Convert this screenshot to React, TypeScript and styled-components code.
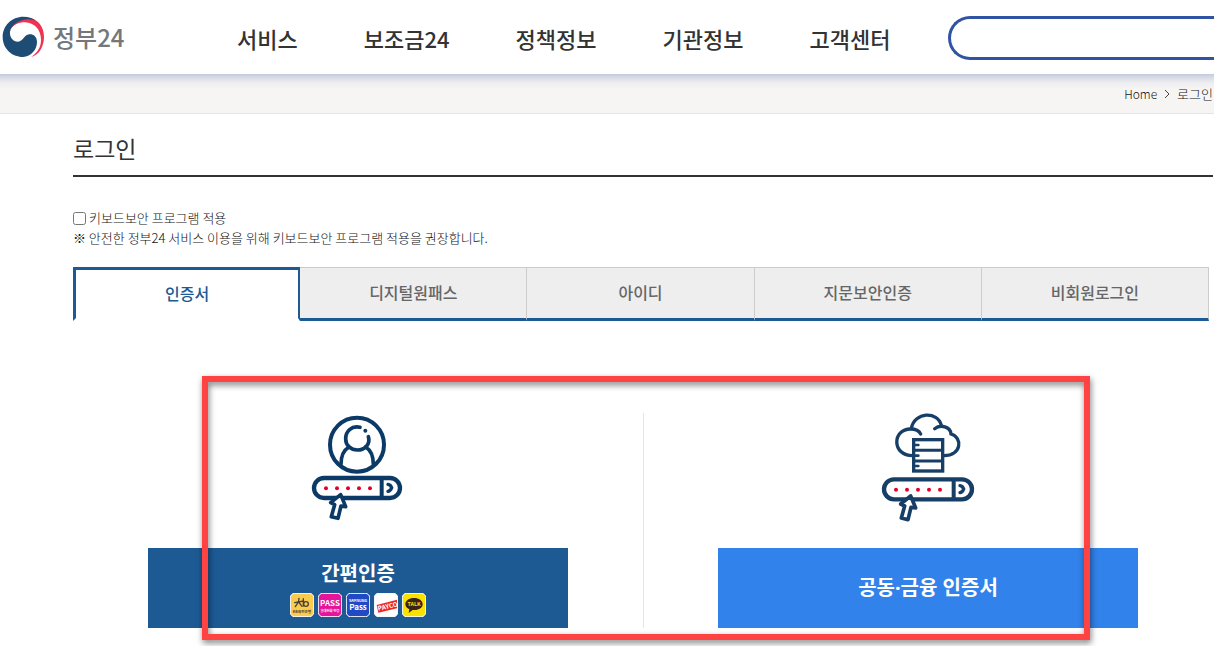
import React from "react";
import styled, { createGlobalStyle } from "styled-components";

const navy = "#1d5a94";
const ink = "#333333";
const iconNavy = "#0b3a66";

const GlobalStyle = createGlobalStyle`
  *, *::before, *::after { box-sizing: border-box; }
  body {
    margin: 0;
    background: #ffffff;
    color: ${ink};
    font-family: "Noto Sans CJK KR", "Noto Sans", sans-serif;
    font-size: 13px;
    line-height: 20px;
  }
  button, input { font-family: inherit; }
  a { color: inherit; text-decoration: none; }
`;

const Header = styled.header`
  display: flex;
  align-items: center;
  height: 74px;
  padding: 2px 0 0 2px;
  background: #ffffff;
`;

const Logo = styled.a`
  display: flex;
  align-items: center;
  gap: 8px;
  width: 235px;
  flex-shrink: 0;
  color: #75777a;
  font-size: 24px;
  font-weight: 500;
  line-height: 36px;
  padding-bottom: 2px;
`;

const Nav = styled.nav`
  display: flex;
  flex-shrink: 0;
  gap: 66px;
  margin-right: 58px;
`;

const NavLink = styled.a`
  font-size: 22px;
  font-weight: 500;
  line-height: 32px;
  white-space: nowrap;
`;

const SearchInput = styled.input`
  flex: 1;
  min-width: 0;
  height: 44px;
  padding: 0 20px;
  border: 3px solid #3153a4;
  border-right: 0;
  border-radius: 22px 0 0 22px;
  background: #ffffff;
  font-size: 16px;
  outline: none;
`;

const BreadcrumbBar = styled.nav`
  display: flex;
  justify-content: flex-end;
  align-items: center;
  gap: 7px;
  height: 40px;
  padding-right: 1px;
  border-bottom: 1px solid #e4e4e4;
  background: linear-gradient(#c2cbdc, #d9dde6 4px, #eeeef1 9px, #f6f5f4 15px);
  color: #111111;
  font-weight: 300;
`;

const HomeLink = styled.a`
  font-size: 12px;
`;

const Main = styled.main`
  padding: 0 1px 18px 73px;
`;

const Title = styled.h1`
  margin: 0;
  padding: 17px 0 10px;
  border-bottom: 2px solid ${ink};
  font-size: 23px;
  font-weight: 400;
  line-height: 34px;
`;

const Security = styled.div`
  margin-top: 31px;
  color: #111111;
  font-weight: 300;
`;

const CheckLabel = styled.label`
  display: flex;
  align-items: center;
  gap: 3px;
`;

const Checkbox = styled.input`
  width: 13px;
  height: 13px;
  margin: 0;
`;

const Notice = styled.p`
  margin: 0;
`;

const Tabs = styled.div`
  display: grid;
  grid-template-columns: repeat(5, 1fr);
  margin: 19px 4px 0 0;
`;

const Tab = styled.button<{ $active?: boolean }>`
  height: 54px;
  padding: 0 0 2px;
  border-style: solid;
  border-color: ${(p) =>
    p.$active ? `${navy} ${navy} transparent` : `#cccccc #cccccc ${navy}`};
  border-width: ${(p) => (p.$active ? "3px 2px 3px 3px" : "1px 1px 3px 0")};
  background: ${(p) => (p.$active ? "#ffffff" : "#eeeeee")};
  color: ${(p) => (p.$active ? navy : "#666666")};
  font-size: 16px;
  font-weight: 500;
  line-height: 24px;
  cursor: pointer;
`;

const Methods = styled.section`
  position: relative;
  display: grid;
  grid-template-columns: 1fr 1fr;
  margin-top: 92px;
`;

const Method = styled.div`
  display: flex;
  flex-direction: column;
  align-items: center;
  gap: 20px;

  & + & {
    box-shadow: inset 1px 0 #e5e5e5;
  }
`;

const MethodButton = styled.button<{ $color: string }>`
  display: flex;
  flex-direction: column;
  align-items: center;
  justify-content: center;
  gap: 4px;
  width: 420px;
  max-width: 100%;
  height: 80px;
  padding: 0;
  border: 0;
  background: ${(p) => p.$color};
  color: #ffffff;
  font-family: "Noto Sans", "Noto Sans CJK KR", sans-serif;
  font-size: 20px;
  font-weight: 700;
  line-height: 30px;
  cursor: pointer;
`;

const Providers = styled.span`
  display: flex;
  gap: 4px;
`;

const Highlight = styled.div`
  position: absolute;
  inset: -37px 123px -12px 129px;
  border: 6px solid #ff4343;
  filter: drop-shadow(1px 3px 3px rgba(0, 0, 0, 0.5));
  pointer-events: none;
`;

const GovEmblem = () => (
  <svg width="43" height="42" viewBox="7 48 129 126" aria-hidden="true">
    <path
      fill="#ef3350"
      d="M33 88C38 66 64 52 90 54C116 58 133 82 133 110C133 140 118 165 94 171C112 160 124 142 124 120C124 88 104 68 76 67C56 67 42 74 33 88Z"
    />
    <path
      fill="#1d4c75"
      d="M114 66C102 55 87 50 71 50C36 50 9 77 9 111C9 145 36 171 70 171C95 170 112 148 112 126C112 110 101 102 89 103C72 104 72 124 55 125C40 125 29 111 31 95C36 73 58 60 82 58C96 57 106 60 114 66Z"
    />
  </svg>
);

const Chevron = () => (
  <svg width="6" height="10" viewBox="0 0 6 10" aria-hidden="true">
    <path d="M1 1l4 4-4 4" fill="none" stroke="#444444" />
  </svg>
);

const PasswordBar = ({ width }: { width: number }) => (
  <>
    <rect x="42" y="219" width={width} height="60" rx="30" strokeWidth="13" />
    <path d={`M${width - 13} 219v60`} strokeWidth="12" />
    <path
      d={`M${width + 6} 238q8 1 11 10q-3 9-11 11`}
      strokeWidth="10"
      strokeLinecap="round"
    />
    <g fill="#e4002b" stroke="none">
      {[78, 111, 144, 177, 210].map((x) => (
        <circle key={x} cx={x} cy="250" r="6" />
      ))}
    </g>
    <path
      d="M122 269L92 293L104 299L94 335L114 340L123 303L137 305Z"
      fill="#ffffff"
      strokeWidth="11"
      strokeLinejoin="round"
    />
  </>
);

const UserIcon = () => (
  <svg width="116" height="115" viewBox="0 24 348 345" fill="none" stroke={iconNavy} aria-hidden="true">
    <circle cx="171" cy="119" r="81" strokeWidth="12" />
    <g strokeWidth="11" strokeLinecap="round">
      <path d="M180 67C154 61 137 80 137 101C137 122 153 135 172 135C196 135 212 116 205 95" />
      <path d="M147 126C130 136 123 154 123 178M197 126C213 136 220 154 220 178" />
    </g>
    <circle cx="196" cy="77" r="6" fill={iconNavy} stroke="none" />
    <PasswordBar width={258} />
  </svg>
);

const CloudIcon = () => (
  <svg width="116" height="115" viewBox="0 24 348 345" fill="none" stroke="#173e67" aria-hidden="true">
    <g strokeWidth="10" strokeLinecap="round">
      <path d="M128 152C65 152 66 72 122 72C136 72 147 77 152 87" />
      <path d="M124 70C134 20 203 18 214 61" />
      <path d="M194 71C211 57 242 65 243 87C279 97 275 152 222 152" />
    </g>
    <rect x="131" y="104" width="87" height="94" strokeWidth="10" />
    <path d="M131 136h87M131 168h87" strokeWidth="9" />
    <path d="M137 120h8M137 152h8M137 183h8" strokeWidth="8" strokeLinecap="round" />
    <g transform="translate(0 4)">
      <PasswordBar width={264} />
    </g>
  </svg>
);

const Tile = ({ color, label, children }: { color: string; label: string; children: React.ReactNode }) => (
  <svg
    width="24"
    height="24"
    viewBox="0 0 72 72"
    role="img"
    aria-label={label}
    textAnchor="middle"
    fontFamily="Noto Sans CJK KR, sans-serif"
  >
    <rect x="1" y="1" width="70" height="70" rx="13" fill={color} stroke="#ffffff" strokeWidth="3" />
    {children}
  </svg>
);

const ProviderTiles = () => (
  <Providers>
    <Tile color="#f9cb4f" label="KB국민은행">
      <g fill="none" stroke="#4d4031" strokeWidth="4" strokeLinecap="round">
        <path d="M14 29l27-5M27 16l-2 11l-9 14M26 27l10 13M40 17v22" />
        <circle cx="48" cy="33" r="7" />
      </g>
      <text x="36" y="60" fontSize="11" fontWeight="700" fill="#4d4031">KB국민은행</text>
    </Tile>
    <Tile color="#e5149b" label="PASS">
      <text x="36" y="38" fontSize="24" fontWeight="700" fill="#ffffff">PASS</text>
      <text x="36" y="56" fontSize="10" fontWeight="700" fill="#ffffff">휴대전화 인증</text>
    </Tile>
    <Tile color="#2149c4" label="Samsung Pass">
      <text x="36" y="28" fontSize="11" fontWeight="700" fill="#ffffff">SAMSUNG</text>
      <text x="36" y="51" fontSize="24" fontWeight="700" fill="#ffffff">Pass</text>
    </Tile>
    <Tile color="#ffffff" label="PAYCO">
      <path d="M8 36L69 20V46L13 59Z" fill="#ee2828" />
      <text x="41" y="47" fontSize="19" fontWeight="700" fill="#ffffff" transform="rotate(-13 41 40)">PAYCO</text>
    </Tile>
    <Tile color="#fae100" label="KakaoTalk">
      <path d="M36 15c-15 0-26 8-26 19c0 7 5 12 12 15l-2 11l12-9c18 2 30-6 30-17c0-11-11-19-26-19z" fill="#3b2020" />
      <text x="36" y="40" fontSize="16" fontWeight="700" fill="#fae100">TALK</text>
    </Tile>
  </Providers>
);

const menu = ["서비스", "보조금24", "정책정보", "기관정보", "고객센터"];
const tabs = ["인증서", "디지털원패스", "아이디", "지문보안인증", "비회원로그인"];

export default function App() {
  return (
    <>
      <GlobalStyle />
      <Header>
        <Logo href="#home">
          <GovEmblem />
          정부24
        </Logo>
        <Nav aria-label="주 메뉴">
          {menu.map((item) => (
            <NavLink key={item} href="#menu">{item}</NavLink>
          ))}
        </Nav>
        <SearchInput type="search" aria-label="검색" />
      </Header>
      <BreadcrumbBar aria-label="현재 위치">
        <HomeLink href="#home">Home</HomeLink>
        <Chevron />
        <span>로그인</span>
      </BreadcrumbBar>
      <Main>
        <Title>로그인</Title>
        <Security>
          <CheckLabel>
            <Checkbox type="checkbox" />
            키보드보안 프로그램 적용
          </CheckLabel>
          <Notice>※ 안전한 정부24 서비스 이용을 위해 키보드보안 프로그램 적용을 권장합니다.</Notice>
        </Security>
        <Tabs role="tablist">
          {tabs.map((tab, i) => (
            <Tab key={tab} type="button" role="tab" aria-selected={i === 0} $active={i === 0}>
              {tab}
            </Tab>
          ))}
        </Tabs>
        <Methods>
          <Method>
            <UserIcon />
            <MethodButton type="button" $color={navy}>
              간편인증
              <ProviderTiles />
            </MethodButton>
          </Method>
          <Method>
            <CloudIcon />
            <MethodButton type="button" $color="#3182ea">공동·금융 인증서</MethodButton>
          </Method>
          <Highlight />
        </Methods>
      </Main>
    </>
  );
}
